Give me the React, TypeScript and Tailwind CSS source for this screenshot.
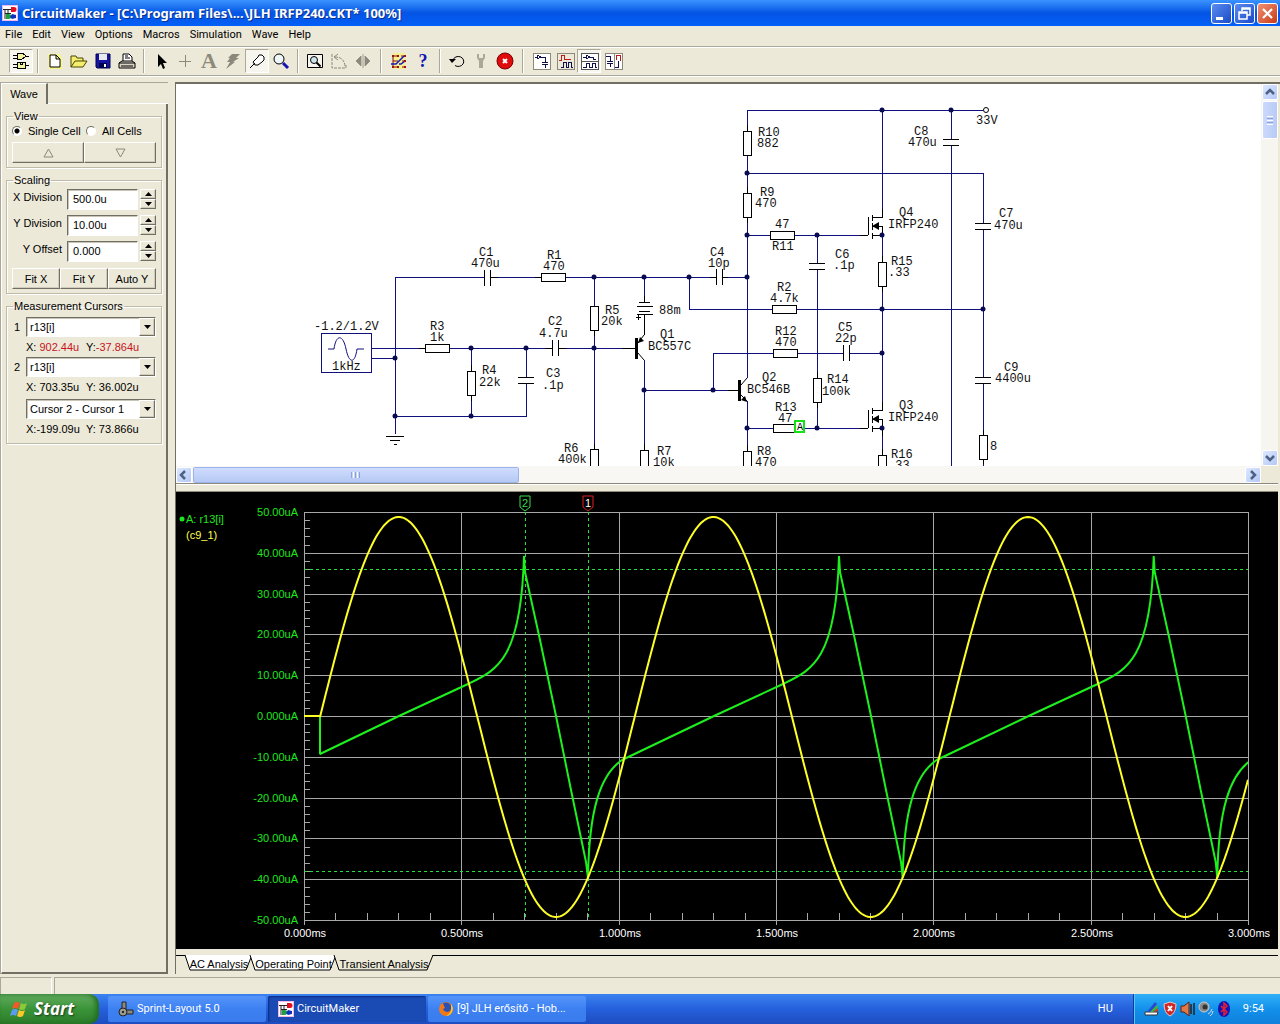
import { useState } from "react"
import type { ReactNode } from "react"

const NAVY = "#10107c"

// x, y (baseline), text
const labels: [number, number, string][] = [
  [314, 330, "-1.2/1.2V"],
  [332, 370, "1kHz"],
  [479, 256, "C1"],
  [471, 267, "470u"],
  [547, 259, "R1"],
  [543, 270, "470"],
  [430, 330, "R3"],
  [430, 341, "1k"],
  [482, 374, "R4"],
  [479, 386, "22k"],
  [546, 377, "C3"],
  [542, 389, ".1p"],
  [548, 325, "C2"],
  [539, 337, "4.7u"],
  [605, 314, "R5"],
  [601, 325, "20k"],
  [564, 452, "R6"],
  [558, 463, "400k"],
  [659, 314, "88m"],
  [660, 338, "Q1"],
  [648, 350, "BC557C"],
  [657, 455, "R7"],
  [653, 466, "10k"],
  [710, 256, "C4"],
  [708, 267, "10p"],
  [777, 291, "R2"],
  [770, 302, "4.7k"],
  [775, 335, "R12"],
  [775, 346, "470"],
  [838, 331, "C5"],
  [835, 342, "22p"],
  [762, 381, "Q2"],
  [747, 393, "BC546B"],
  [775, 411, "R13"],
  [778, 422, "47"],
  [757, 455, "R8"],
  [755, 466, "470"],
  [976, 124, "33V"],
  [758, 136, "R10"],
  [757, 147, "882"],
  [760, 196, "R9"],
  [755, 207, "470"],
  [775, 228, "47"],
  [772, 250, "R11"],
  [835, 258, "C6"],
  [833, 269, ".1p"],
  [827, 383, "R14"],
  [822, 395, "100k"],
  [899, 216, "Q4"],
  [888, 228, "IRFP240"],
  [891, 265, "R15"],
  [888, 276, ".33"],
  [899, 409, "Q3"],
  [888, 421, "IRFP240"],
  [891, 458, "R16"],
  [888, 469, ".33"],
  [914, 135, "C8"],
  [908, 146, "470u"],
  [999, 217, "C7"],
  [994, 229, "470u"],
  [1004, 371, "C9"],
  [995, 382, "4400u"],
  [990, 450, "8"]
]

const nodes = [
  [395, 358], [395, 416], [471, 416], [471, 348], [526, 348], [594, 277], [594, 348],
  [644, 277], [689, 277], [747, 277], [747, 173], [747, 235], [747, 428], [644, 390],
  [713, 390], [817, 235], [817, 428], [882, 110], [951, 110], [882, 309], [983, 309],
  [882, 353], [882, 235], [882, 428]
]

const hResistors = [[541, 273], [425, 344], [772, 305], [773, 349], [770, 231], [773, 424]]
const vResistors = [
  [467, 371], [590, 306], [590, 449], [640, 450], [743, 131], [743, 193],
  [743, 451], [813, 378], [878, 262], [878, 455], [979, 435]
]

const wires = [
  "M371 348H425M371 358H395M395 434V277H484M490 277H541M565 277H716M722 277H747",
  "M449 348H552M558 348H636M471 348V371M471 395V416M526 348V377M526 383V416H395",
  "M594 277V306M594 330V449M644 277V302M644 314V335M644 360V450M644 390H739",
  "M713 390V353H773M797 353H843M849 353H882M689 277V309H772M796 309H983",
  "M747 131V110H983M747 155V193M747 217V378M747 401V451M747 428H773M797 428H868",
  "M747 235H770M794 235H868M817 235V263M817 269V378M817 402V428",
  "M882 110V217M882 235V262M882 286V410M882 428V455M951 110V139M951 145V470",
  "M747 173H983V223M983 229V377M983 383V435M983 459V470"
].join("")

// plates, battery, ground and the short component leads
const parts = [
  "M484 270V286M490 270V286M716 269V285M722 269V285M552 340V356M558 340V356M843 345V361M849 345V361",
  "M518 377H534M518 383H534M809 263H825M809 269H825M943 139H959M943 145H959",
  "M975 223H991M975 229H991M975 377H991M975 383H991",
  "M639 302H650M637 306H653M639 311H650M637 314H653M636 317H641M638 315V320",
  "M386 436H404M390 440H400M394 444H397",
  "M535 277H541M419 348H425M546 348H552M558 348H566M622 348H636M490 277H498M710 277H716M722 277H728",
  "M747 125V131M747 187V193M747 217V223M882 256V262M882 286V292M882 449V455M882 428V436M983 430V435M983 459V464",
  "M644 296V302M644 314V335M471 365V371M471 395V401M594 330V336M594 444V449M644 444V450M747 445V451",
  "M817 372V378M817 402V408M860 235H868M860 428H868M728 390H739"
].join("")

function Mosfet({ y }: { y: number }) {
  return (
    <g transform={`translate(868 ${y})`}>
      <path
        d="M0 0V18M4 -2V4M4 6V13M4 16V22M4 0H14V-8M4 18H14V9H4"
        fill="none"
        stroke="#000"
        shapeRendering="crispEdges"
      />
      <path d="M4 9L11 5V13Z" />
    </g>
  )
}

function Schematic() {
  return (
    <svg width="1085" height="382" viewBox="176 84 1085 382" className="block max-w-none">
      <g fill="none" shapeRendering="crispEdges">
        <path d={wires} stroke={NAVY} />
        <path d={parts} stroke="#000" />
        <rect x="321" y="333" width="50" height="39" fill="#fff" stroke={NAVY} />
      </g>
      <path d="M328 349H334C336 334 343 334 346 349S355 364 357 349H364" fill="none" stroke={NAVY} />
      <g fill="#fff" stroke="#000" shapeRendering="crispEdges">
        {hResistors.map(([x, y]) => (
          <rect key={`${x}-${y}`} x={x} y={y} width="24" height="8" />
        ))}
        {vResistors.map(([x, y]) => (
          <rect key={`${x}-${y}`} x={x} y={y} width="8" height="24" />
        ))}
      </g>
      {/* Q1 */}
      <rect x="635" y="338" width="3" height="21" />
      <path d="M638 343L644 335M638 353L644 360" stroke="#000" fill="none" />
      <path d="M638 343L640 337L644 341Z" />
      {/* Q2 */}
      <rect x="738" y="380" width="3" height="21" />
      <path d="M741 385L747 378M741 395L747 401" stroke="#000" fill="none" />
      <path d="M747 402L741 400L745 396Z" />
      <Mosfet y={217} />
      <Mosfet y={410} />
      <circle cx="986" cy="110" r="2.5" fill="#fff" stroke="#000" />
      {nodes.map(([x, y]) => (
        <circle key={`${x}-${y}`} cx={x} cy={y} r="2.5" fill="#0a0a50" />
      ))}
      <g className="font-['Liberation_Mono',monospace] text-[12px]" fill="#111">
        {labels.map(([x, y, text]) => (
          <text key={`${x}-${y}`} x={x} y={y}>
            {text}
          </text>
        ))}
      </g>
      <rect x="795" y="421" width="9" height="11" fill="#fff" stroke="#14e014" strokeWidth="2" />
      <text x="797" y="430" className="font-['Liberation_Mono',monospace] text-[10px]">
        A
      </text>
    </svg>
  )
}

const PLOT = { left: 304, right: 1248, top: 512, bottom: 920, zero: 717 }
const MS = (PLOT.right - PLOT.left) / 3
const UA = (PLOT.bottom - PLOT.top) / 100

function sinePath() {
  let d = `M${PLOT.left} 716H320`
  for (let x = 320; x <= PLOT.right; x += 2) {
    d += `L${x} ${(PLOT.zero - 200 * Math.sin(((x - 320) / MS) * 2 * Math.PI)).toFixed(1)}`
  }
  return d
}

// resistor current: slow ramp, sharp peak, then a steep fall to the next period
function currentPath() {
  let d = "M320 716V754L399 716L468 684C497 670 521 660 524 556L525 572L540 640L556 716L571 790L586 862"
  for (let n = 0; n < 3; n++) {
    const p = (x: number, y: number) => `${(x + n * MS).toFixed(1)} ${y}`
    d += `L${p(588, 878)}C${p(589, 810)} ${p(600, 775)} ${p(622, 760)}`
    d += `L${p(714, 716)}L${p(783, 684)}C${p(812, 670)} ${p(836, 660)} ${p(839, 556)}`
    d += `L${p(840, 572)}L${p(855, 640)}L${p(871, 716)}L${p(886, 790)}L${p(901, 862)}`
  }
  return d
}

function Flag({ x, color, text, label }: { x: number; color: string; text: string; label: string }) {
  return (
    <g>
      <path d={`M${x - 5} 496H${x + 5}V507L${x} 511L${x - 5} 507Z`} fill="#000" stroke={color} />
      <text x={x} y="507" fill={text} textAnchor="middle">
        {label}
      </text>
    </g>
  )
}

function WaveChart() {
  const rows = Array.from({ length: 11 }, (_, i) => i)
  const minor = Array.from({ length: 50 }, (_, i) => i)
  const columns = Array.from({ length: 7 }, (_, i) => i)
  const ticks = Array.from({ length: 30 }, (_, i) => i)

  return (
    <svg viewBox="176 492 1102 457" className="block w-full bg-black font-['Liberation_Sans',sans-serif] text-[11px]">
      <defs>
        <clipPath id="plot">
          <rect x="304" y="500" width="944" height="425" />
        </clipPath>
      </defs>
      <g stroke="#a8a8a8" shapeRendering="crispEdges">
        {rows.map((i) => (
          <line key={i} x1={PLOT.left} x2={PLOT.right} y1={Math.round(PLOT.top + i * 10 * UA)} y2={Math.round(PLOT.top + i * 10 * UA)} />
        ))}
        {minor.map((i) => (
          <line key={i} x1={PLOT.left} x2={310} y1={Math.round(PLOT.top + i * 2 * UA)} y2={Math.round(PLOT.top + i * 2 * UA)} />
        ))}
        {columns.map((i) => (
          <line key={i} x1={Math.round(PLOT.left + (i * MS) / 2)} x2={Math.round(PLOT.left + (i * MS) / 2)} y1={PLOT.top} y2={925} />
        ))}
        {ticks.map((i) => (
          <line key={i} x1={Math.round(PLOT.left + (i * MS) / 10)} x2={Math.round(PLOT.left + (i * MS) / 10)} y1={913} y2={PLOT.bottom} />
        ))}
      </g>
      <g stroke="#28e03c" strokeDasharray="3 3" shapeRendering="crispEdges">
        <line x1="304" x2="1248" y1="569" y2="569" />
        <line x1="304" x2="1248" y1="871" y2="871" />
        <line x1="525" x2="525" y1="512" y2="920" />
        <line x1="588" x2="588" y1="512" y2="920" />
      </g>
      <g fill="none" strokeWidth="2" clipPath="url(#plot)">
        <path d={currentPath()} stroke="#1ef01e" strokeLinejoin="bevel" />
        <path d={sinePath()} stroke="#ffff28" />
      </g>
      <Flag x={525} color="#3cdc50" text="#3cdc50" label="2" />
      <Flag x={588} color="#e02020" text="#fff" label="1" />
      <g fill="#1ee61e">
        {rows.map((i) => (
          <text key={i} x="298" y={Math.round(516 + i * 10 * UA)} textAnchor="end">
            {i === 5 ? "0.000uA" : `${50 - i * 10}.00uA`}
          </text>
        ))}
        <circle cx="182" cy="519" r="2.5" />
        <text x="186" y="523">
          A: r13[i]
        </text>
      </g>
      <text x="186" y="539" fill="#ffff50">
        (c9_1)
      </text>
      <g fill="#fff">
        {columns.map((i) => (
          <text key={i} x={Math.round(305 + (i * MS) / 2)} y="937" textAnchor="middle">
            {`${(i / 2).toFixed(3)}ms`}
          </text>
        ))}
      </g>
    </svg>
  )
}

function AppIcon() {
  return (
    <svg width="16" height="16" viewBox="0 0 16 16" className="shrink-0">
      <rect width="16" height="16" fill="#f4b8e8" />
      <rect x="1" y="1" width="14" height="14" fill="#fff" />
      <path d="M1 4.5H10M3 4V14M6 4V8M3 8.5H9" stroke="#222" fill="none" />
      <path d="M9 2h3a2 2 0 0 1 0 5h-3z" fill="#e01020" />
      <path d="M4 9h3a2 2 0 0 1 0 5H4z" fill="#20a040" />
      <path d="M10 9l4 1v3l-4 1-2-2z" fill="#1030c0" />
    </svg>
  )
}

const icons: Record<string, ReactNode> = {
  gates: (
    <g fill="#f4f49c" stroke="#000" shapeRendering="crispEdges">
      <path d="M5 1h5l3 2v2l-3 2H5zM5 10h8v6H5z" />
      <path d="M1 3h4M1 6h4M13 4h4M1 12h4M1 15h4M13 13h4M8 10v2h2v-2" fill="none" />
    </g>
  ),
  new: (
    <g>
      <path d="M2 2h11l3 4v11H3z" fill="#f6f68a" />
      <path d="M4 3h6l4 4v8H4zM10 3v4h4" fill="#fff" stroke="#000" />
    </g>
  ),
  open: <path d="M1 15V4h5l1 2h6v3M1 15l4-6h12l-4 6z" fill="#f4ee70" stroke="#4a4400" />,
  save: (
    <g>
      <path d="M2 2h14v14H3l-1-1z" fill="#1414a0" stroke="#000050" />
      <path d="M5 2h8v6H5z" fill="#e8e8f0" />
      <path d="M5 11h8v5H5z" fill="#000050" />
      <path d="M10 12h2v3h-2z" fill="#fff" />
    </g>
  ),
  print: (
    <g fill="#fff" stroke="#000">
      <path d="M5 9V2h6l3 3v4M7 4h3M7 6h5" />
      <path d="M1 11l3-2h10l3 2v5H1zM1 11h16M3 14h12" fill="#d8d4c4" />
    </g>
  ),
  arrow: <path d="M6 2v13l3-3 2 5 2-1-2-5h4z" />,
  plus: <path d="M9 3v12M3 9h12" stroke="#8c897c" shapeRendering="crispEdges" />,
  bolt: <path d="M8 2h8l-4 4h3l-6 4h2l-9 7 4-7H3l3-4H4z" fill="#8c897c" />,
  probe: <path d="M2 16l5-5M7 13l-2-3 5-5 1-2h3l2 2v3l-2 2-4 3z" fill="#fff" stroke="#000" />,
  magnifier: (
    <g>
      <circle cx="7" cy="7" r="5" fill="#eef6fa" stroke="#000" />
      <path d="M11 11l5 5" stroke="#1414b4" strokeWidth="3" />
    </g>
  ),
  zoomPage: (
    <g fill="none" stroke="#000">
      <path d="M1.500 2.500h15v13h-15z" fill="#f6f5ee" />
      <circle cx="8" cy="8" r="3.500" fill="#cde4ea" />
      <path d="M10.500 10.500l4 4" strokeWidth="2" />
    </g>
  ),
  rotate: (
    <g fill="none" stroke="#8c897c">
      <path d="M2 2v14h14v-3M5 5q9 0 10 9" strokeDasharray="3 1" />
      <path d="M8 2L4 5l4 3" />
    </g>
  ),
  mirror: <path d="M7 4v10L2 9zM11 4v10l5-5zM9 2v14" fill="#8c897c" stroke="#8c897c" strokeWidth="0.8" />,
  trace: (
    <g fill="none">
      <path d="M3 1h12v16H3z" fill="#f8f090" />
      <path d="M3 4H8M3 9h5M3 15h6M11 4h4M12 9h4M12 15h4M3 4v11" stroke="#801010" />
      <path d="M1 12h5l8-8M9 12h2l4-3" stroke="#1818b8" strokeWidth="1.5" />
      <path d="M2 3h2v2H2zM7 3h2v2H7zM14 3h2v2h-2zM14 8h2v2h-2zM7 14h2v2H7zM14 14h2v2h-2zM2 14h2v2H2z" fill="#a01010" />
    </g>
  ),
  undo: (
    <g fill="none" stroke="#000">
      <path d="M5 8a5.500 5 0 1 1 2 5.500" />
      <path d="M1 7h7l-4 4z" fill="#000" stroke="none" />
    </g>
  ),
  wrench: <path d="M5 2v4l2 3v7h4V9l2-3V2h-2v4H7V2z" fill="#aca899" />,
  stop: (
    <g>
      <circle cx="9" cy="9" r="8" fill="#e00c0c" stroke="#700" />
      <path d="M7 7l4 4M11 7l-4 4" stroke="#fff" strokeWidth="2" />
    </g>
  ),
  circuit: (
    <g fill="none" stroke="#10104a" shapeRendering="crispEdges">
      <path d="M1 1h17v16H1z" fill="#fff" stroke="#8c897c" />
      <path d="M3 5h2M5 3v4l4-2zM9 5h4v5M10 10h6M10 12h6M13 12v4" />
    </g>
  ),
  waves: (
    <g fill="none" stroke="#10104a" shapeRendering="crispEdges">
      <path d="M1 1h17v16H1z" fill="#ece9d8" stroke="#8c897c" />
      <path d="M3 8h2V3h3v4h7" stroke="#c01818" />
      <path d="M5 15h2v-5h3v5h2v-5h3v5h2" />
    </g>
  ),
  split: (
    <g fill="none" stroke="#10104a" shapeRendering="crispEdges">
      <path d="M1 1h17v16H1zM1 9h17" fill="#fff" stroke="#555" />
      <path d="M3 5h3M6 3v4l4-2zM10 5h3v2h3M3 15h3v-4h3v4h3v-4h3v4h2" />
    </g>
  ),
  sideBySide: (
    <g fill="none" stroke="#10104a" shapeRendering="crispEdges">
      <path d="M1 1h17v16H1zM10 1v16" fill="#fff" stroke="#8c897c" />
      <path d="M2 4h4v5M3 9h6M3 11h6M6 11v4M11 15h3V9" />
      <path d="M12 8V3h4v6" stroke="#c01818" />
    </g>
  )
}

function ToolButton({ name, pressed }: { name: string; pressed?: boolean }) {
  return (
    <button
      aria-label={name}
      className={
        pressed
          ? "flex h-6 w-6 items-center justify-center border border-t-[#aca899] border-l-[#aca899] border-r-white border-b-white bg-[#f6f5ee]"
          : "flex h-6 w-6 items-center justify-center"
      }
    >
      {name === "text" ? (
        <span className="font-['Liberation_Serif',serif] text-[22px] leading-6 font-bold text-[#8c897c]">A</span>
      ) : name === "help" ? (
        <span className="font-['Liberation_Serif',serif] text-[18px] leading-6 font-bold text-[#1414b4]">?</span>
      ) : (
        <svg width="19" height="18" viewBox="0 0 19 18" className="shrink-0">
          {icons[name]}
        </svg>
      )}
    </button>
  )
}

function Separator({ wide }: { wide?: boolean }) {
  return (
    <div className={wide ? "flex h-6 w-3 justify-center" : "flex h-6 w-[10px] justify-center"}>
      <div className="w-[2px] border-l border-[#aca899] bg-white" />
    </div>
  )
}

function Toolbar() {
  return (
    <div className="flex h-[30px] items-center border-t border-b border-[#aca899] pl-[9px] shadow-[inset_0_1px_#fff,0_1px_#fff]">
      <ToolButton name="gates" pressed />
      <Separator />
      {["new", "open", "save", "print"].map((n) => (
        <ToolButton key={n} name={n} />
      ))}
      <Separator />
      {["arrow", "plus", "text", "bolt", "probe", "magnifier"].map((n) => (
        <ToolButton key={n} name={n} pressed={n === "probe"} />
      ))}
      <Separator />
      {["zoomPage", "rotate", "mirror"].map((n) => (
        <ToolButton key={n} name={n} />
      ))}
      <Separator wide />
      {["trace", "help"].map((n) => (
        <ToolButton key={n} name={n} />
      ))}
      <Separator />
      {["undo", "wrench", "stop"].map((n) => (
        <ToolButton key={n} name={n} />
      ))}
      <Separator wide />
      {["circuit", "waves", "split", "sideBySide"].map((n) => (
        <ToolButton key={n} name={n} pressed={n === "split"} />
      ))}
    </div>
  )
}

function TitleBar() {
  return (
    <div className="flex h-[26px] items-center bg-linear-to-b from-[#3a93ff] via-[#0454e4] to-[#0460f8] px-[2px]">
      <AppIcon />
      <h1 className="ml-1 flex-1 font-['Noto_Sans',sans-serif] text-[13px] leading-5 font-bold whitespace-nowrap text-white [text-shadow:1px_1px_#0a2f8c]">
        CircuitMaker - [C:\Program Files\...\JLH IRFP240.CKT* 100%]
      </h1>
      <div className="flex gap-[2px]">
        <button aria-label="Minimize" className="h-[21px] w-[21px] rounded-[3px] border border-white bg-linear-to-br from-[#5a8cf0] to-[#1c49c8]">
          <svg viewBox="0 0 19 19">
            <path d="M4 13h7v3H4z" fill="#fff" />
          </svg>
        </button>
        <button aria-label="Restore" className="h-[21px] w-[21px] rounded-[3px] border border-white bg-linear-to-br from-[#5a8cf0] to-[#1c49c8]">
          <svg viewBox="0 0 19 19">
            <path d="M7 7V4h8v7h-3M7 5h8M4 8h8v7H4zM4 9h8" fill="none" stroke="#fff" strokeWidth="1.500" />
          </svg>
        </button>
        <button aria-label="Close" className="h-[21px] w-[21px] rounded-[3px] border border-white bg-linear-to-br from-[#f09070] to-[#c83810]">
          <svg viewBox="0 0 19 19">
            <path d="M5 5l9 9M14 5l-9 9" stroke="#fff" strokeWidth="2.200" />
          </svg>
        </button>
      </div>
    </div>
  )
}

const raised = "border border-t-white border-l-white border-r-[#716f64] border-b-[#716f64] shadow-[inset_-1px_-1px_#cfccbb] bg-[#ece9d8]"
const sunken = "border border-t-[#716f64] border-l-[#716f64] border-r-white border-b-white shadow-[inset_1px_1px_#c8c5b6] bg-white"

function Group({ title, children }: { title: string; children: ReactNode }) {
  return (
    <fieldset className="border border-[#bfbba9] px-[5px] pb-[4px] shadow-[inset_1px_1px_#fff,1px_1px_#fff]">
      <legend className="ml-px px-px leading-3">{title}</legend>
      {children}
    </fieldset>
  )
}

function DivisionField({ id, label, initial }: { id: string; label: string; initial: string }) {
  const [value, setValue] = useState(initial)

  return (
    <div className="flex h-[26px] items-center">
      <label htmlFor={id} className="w-[50px] pb-1 text-right whitespace-nowrap">
        {label}
      </label>
      <input
        id={id}
        value={value}
        onChange={(e) => setValue(e.target.value)}
        className={`ml-[5px] h-[21px] w-[71px] px-[5px] ${sunken}`}
      />
      <div className="ml-[2px] flex w-4 flex-col">
        <button aria-label={`Increase ${label}`} className={`flex h-[10px] items-center justify-center ${raised}`}>
          <svg width="7" height="4" viewBox="0 0 7 4">
            <path d="M0 4L3.500 0L7 4Z" />
          </svg>
        </button>
        <button aria-label={`Decrease ${label}`} className={`flex h-[10px] items-center justify-center ${raised}`}>
          <svg width="7" height="4" viewBox="0 0 7 4">
            <path d="M0 0L3.500 4L7 0Z" />
          </svg>
        </button>
      </div>
    </div>
  )
}

function Combo({ label, options }: { label: string; options: string[] }) {
  return (
    <div className="relative ml-[14px] h-5">
      <select aria-label={label} className={`h-5 w-full appearance-none px-[3px] ${sunken}`}>
        {options.map((o) => (
          <option key={o}>{o}</option>
        ))}
      </select>
      <span className={`pointer-events-none absolute top-px right-px flex h-[18px] w-4 items-center justify-center ${raised}`}>
        <svg width="7" height="4" viewBox="0 0 7 4">
          <path d="M0 0L3.500 4L7 0Z" />
        </svg>
      </span>
    </div>
  )
}

function Readout({ x, y, red }: { x: string; y: string; red?: boolean }) {
  const color = red ? "text-[#c8141e]" : ""
  return (
    <div className="ml-[14px] flex h-5 items-center whitespace-pre">
      <span className="w-[60px]">
        X:<span className={color}>{x}</span>
      </span>
      <span>
        Y:<span className={color}>{y}</span>
      </span>
    </div>
  )
}

function SidePanel() {
  const [cell, setCell] = useState("single")

  return (
    <aside className="flex w-[168px] shrink-0 flex-col border-t border-[#aca899] border-l border-l-[#aca899] font-['Liberation_Sans',sans-serif] text-[11px] leading-3">
      <div className="flex">
        <button className="h-[21px] w-[47px] border-t border-l border-white border-r-2 border-r-[#716f64]">Wave</button>
        <div className="flex-1 border-b border-white" />
      </div>
      <div className="flex flex-1 flex-col gap-[6px] border-r-2 border-b-2 border-l border-r-[#716f64] border-b-[#716f64] border-l-white px-1 pt-[6px]">
        <Group title="View">
          <div className="flex h-[17px] items-center">
            <label className="flex w-[74px] items-center gap-[6px] whitespace-nowrap">
              <input
                type="radio"
                name="cell"
                checked={cell === "single"}
                onChange={() => setCell("single")}
                className="h-[10px] w-[10px] appearance-none rounded-full border border-[#716f64] border-r-white border-b-white bg-white checked:bg-[radial-gradient(#000_2px,#fff_3px)]"
              />
              Single Cell
            </label>
            <label className="flex items-center gap-[6px] whitespace-nowrap">
              <input
                type="radio"
                name="cell"
                checked={cell === "all"}
                onChange={() => setCell("all")}
                className="h-[10px] w-[10px] appearance-none rounded-full border border-[#716f64] border-r-white border-b-white bg-white checked:bg-[radial-gradient(#000_2px,#fff_3px)]"
              />
              All Cells
            </label>
          </div>
          <div className="mt-[3px] flex">
            <button aria-label="Previous cell" className={`flex h-[21px] flex-1 items-center justify-center ${raised}`}>
              <svg width="11" height="10" viewBox="0 0 11 10">
                <path d="M1 9h9L5.500 1z" fill="none" stroke="#8c897c" />
              </svg>
            </button>
            <button aria-label="Next cell" className={`flex h-[21px] flex-1 items-center justify-center ${raised}`}>
              <svg width="11" height="10" viewBox="0 0 11 10">
                <path d="M1 1h9L5.500 9z" fill="none" stroke="#8c897c" />
              </svg>
            </button>
          </div>
        </Group>

        <Group title="Scaling">
          <DivisionField id="x-division" label="X Division" initial="500.0u" />
          <DivisionField id="y-division" label="Y Division" initial="10.00u" />
          <DivisionField id="y-offset" label="Y Offset" initial="0.000" />
          <div className="mt-1 flex">
            {["Fit X", "Fit Y", "Auto Y"].map((t) => (
              <button key={t} className={`h-[21px] flex-1 whitespace-nowrap ${raised}`}>
                {t}
              </button>
            ))}
          </div>
        </Group>

        <Group title="Measurement Cursors">
          <div className="relative mt-[5px]">
            <span className="absolute top-1 left-[2px]">1</span>
            <Combo label="Cursor 1" options={["r13[i]", "c9_1"]} />
          </div>
          <Readout x=" 902.44u" y="-37.864u" red />
          <div className="relative">
            <span className="absolute top-1 left-[2px]">2</span>
            <Combo label="Cursor 2" options={["r13[i]", "c9_1"]} />
          </div>
          <Readout x=" 703.35u" y=" 36.002u" />
          <div className="mt-[2px]">
            <Combo label="Difference" options={["Cursor 2 - Cursor 1", "Cursor 1 - Cursor 2"]} />
          </div>
          <Readout x="-199.09u" y=" 73.866u" />
        </Group>
      </div>
    </aside>
  )
}

const chevrons: Record<string, string> = {
  up: "M4 10L8 6L12 10",
  down: "M4 6L8 10L12 6",
  left: "M9 4L5 8L9 12",
  right: "M6 4L10 8L6 12"
}

function ScrollArrow({ dir }: { dir: string }) {
  return (
    <button aria-label={`Scroll ${dir}`} className="h-4 w-4 rounded-[2px] border border-white bg-linear-to-br from-[#dde8ff] to-[#b4c8f6]">
      <svg viewBox="1 1 14 14">
        <path d={chevrons[dir]} fill="none" stroke="#4d6185" strokeWidth="2.500" />
      </svg>
    </button>
  )
}

function SchematicPane() {
  return (
    <div>
      <div className="flex h-[382px]">
        <div className="min-w-0 flex-1 overflow-hidden bg-white">
          <Schematic />
        </div>
        <div className="flex w-[17px] flex-col items-center bg-[#f6f5f0]">
          <ScrollArrow dir="up" />
          <div className="mt-px flex h-[38px] w-4 flex-col items-center justify-center gap-px rounded-[2px] border border-white bg-linear-to-r from-[#ccd9fd] to-[#b9cbf5]">
            <div className="h-px w-[6px] bg-white" />
            <div className="h-px w-[6px] bg-[#8ca4d8]" />
            <div className="h-px w-[6px] bg-white" />
            <div className="h-px w-[6px] bg-[#8ca4d8]" />
            <div className="h-px w-[6px] bg-white" />
          </div>
          <div className="flex-1" />
          <ScrollArrow dir="down" />
        </div>
      </div>
      <div className="flex h-[17px]">
        <div className="flex flex-1 items-center bg-[#f8f7f3]">
          <ScrollArrow dir="left" />
          <div className="mx-px flex h-4 w-[30%] items-center justify-center gap-px rounded-[2px] border border-[#9cb4ec] bg-linear-to-b from-[#cfdcfe] to-[#b6c9f4]">
            <div className="h-[6px] w-px bg-[#8ca4d8]" />
            <div className="h-[6px] w-px bg-white" />
            <div className="h-[6px] w-px bg-[#8ca4d8]" />
            <div className="h-[6px] w-px bg-white" />
            <div className="h-[6px] w-px bg-[#8ca4d8]" />
          </div>
          <div className="flex-1" />
          <ScrollArrow dir="right" />
        </div>
        <div className="w-[17px]" />
      </div>
    </div>
  )
}

const analyses = [
  { name: "AC Analysis", width: "w-[68px]", path: "M0 0L5 15H61L67 0" },
  { name: "Operating Point", width: "w-[87px]", path: "M0 0L5 15H80L86 0" },
  { name: "Transient Analysis", width: "w-[100px]", path: "M0 0L5 15H93L99 0" }
]

function AnalysisTabs() {
  const [active, setActive] = useState("Transient Analysis")

  return (
    <div className="h-[22px] pt-[6px]">
      <div className="flex border-t border-black pl-[9px]">
        {analyses.map((a) => (
          <button
            key={a.name}
            onClick={() => setActive(a.name)}
            className={`relative -mr-[3px] h-4 font-['Liberation_Sans',sans-serif] text-[11px] leading-[14px] whitespace-nowrap ${a.width}`}
          >
            <svg className="absolute -top-px left-0 overflow-visible" width="100%" height="16">
              <path d={a.path} fill={a.name === active ? "#ece9d8" : "#fff"} stroke="#000" />
            </svg>
            <span className="relative">{a.name}</span>
          </button>
        ))}
      </div>
    </div>
  )
}

function TaskButton({ icon, label, active }: { icon: ReactNode; label: string; active?: boolean }) {
  return (
    <button
      className={`flex h-[26px] w-[158px] items-center gap-[3px] rounded-[2px] px-[10px] text-left text-white ${
        active ? "bg-[#1a4ab4] shadow-[inset_1px_1px_2px_#0c2c80]" : "bg-linear-to-b from-[#5594fa] via-[#3c80f2] to-[#3a7cee]"
      }`}
    >
      {icon}
      {label}
    </button>
  )
}

function Taskbar() {
  return (
    <footer className="flex h-[30px] items-center bg-linear-to-b from-[#3b82f0] via-[#2560dc] to-[#1e4cc0] text-[11px] text-white">
      <button className="flex h-[30px] w-[99px] items-center gap-1 rounded-r-[10px] bg-linear-to-b from-[#62ac60] via-[#3a9438] to-[#2c7c2a] pl-[10px] font-['Open_Sans',sans-serif] text-[17px] font-bold text-white italic shadow-[inset_-3px_0_5px_#226a22] [text-shadow:1px_1px_2px_#1a3a1a]">
        <svg width="20" height="19" viewBox="0 0 20 19">
          <path d="M4 3q3-2 6 0L8 9q-3-2-6 0z" fill="#f05a28" />
          <path d="M11 3q3 2 6 0l-2 6q-3 2-6 0z" fill="#8cc83c" />
          <path d="M2 10q3-2 6 0l-2 6q-3-2-6 0z" fill="#5a9cf0" />
          <path d="M9 10q3 2 6 0l-2 6q-3 2-6 0z" fill="#fcc828" />
        </svg>
        Start
      </button>
      <div className="ml-[9px] flex flex-1 gap-[2px]">
        <TaskButton
          label="Sprint-Layout 5.0"
          icon={
            <svg width="16" height="16" viewBox="0 0 16 16">
              <path d="M4 1h4v8H4zM8 9h7v4H8z" fill="#8a8a80" stroke="#222" />
              <circle cx="5" cy="11" r="4" fill="#9a9a90" stroke="#222" />
              <circle cx="5" cy="11" r="1" />
            </svg>
          }
        />
        <TaskButton label="CircuitMaker" icon={<AppIcon />} active />
        <TaskButton
          label="[9] JLH erősítő - Hob..."
          icon={
            <svg width="16" height="16" viewBox="0 0 16 16">
              <circle cx="8" cy="8" r="7" fill="#f07818" />
              <path d="M5 2q6-2 8 3 1 4-3 6-4 0-5-3l2-1-1-2z" fill="#2c50b4" />
              <path d="M13 3q3 4 1 8-2 4-6 4 5-3 5-6z" fill="#fcc828" />
            </svg>
          }
        />
      </div>
      <span className="mr-5">HU</span>
      <div className="flex h-[30px] items-center gap-[2px] border-l border-[#0c3c9c] bg-linear-to-b from-[#30b0f8] via-[#1290ea] to-[#1080dc] pr-4 pl-[10px] shadow-[inset_1px_0_#5cc4fc]">
        <svg width="16" height="16" viewBox="0 0 16 16">
          <path d="M1 11h13l-1 3H1z" fill="#fff" stroke="#333" />
          <path d="M3 11L11 1l2 2-6 8z" fill="#2848d0" />
          <path d="M6 11l7-7 1 3-5 4z" fill="#38b838" />
          <path d="M9 11l5-4v3z" fill="#e83020" />
        </svg>
        <svg width="16" height="16" viewBox="0 0 16 16">
          <path d="M8 1l6 2q0 9-6 12Q2 12 2 3z" fill="#d02828" stroke="#e8c8c8" />
          <path d="M6 5l4 5M10 5l-4 5" stroke="#fff" strokeWidth="2" />
        </svg>
        <svg width="16" height="16" viewBox="0 0 16 16">
          <path d="M1 5h3l5-4v14l-5-4H1z" fill="#e07848" stroke="#5a2010" />
          <path d="M11 3v10M14 2v12" stroke="#222" strokeWidth="1.500" />
        </svg>
        <svg width="16" height="16" viewBox="0 0 16 16">
          <circle cx="6" cy="6" r="5" fill="#888" stroke="#ccc" />
          <circle cx="7" cy="6" r="2.500" fill="#333" />
          <path d="M10 13q3-1 4-5M12 15q3-2 3-5" stroke="#c8d8f0" fill="none" />
        </svg>
        <svg width="16" height="16" viewBox="0 0 16 16">
          <ellipse cx="8" cy="8" rx="6" ry="8" fill="#1414b4" />
          <path d="M5 5l6 6-3 3V2l3 3-6 6" fill="none" stroke="#e82030" strokeWidth="1.500" />
        </svg>
        <span className="ml-[9px]">9:54</span>
      </div>
    </footer>
  )
}

export default function App() {
  return (
    <div className="flex min-h-screen flex-col bg-[#ece9d8] font-['Roboto',sans-serif] text-[11px] leading-4 text-black">
      <TitleBar />
      <nav className="flex h-5 items-center gap-[10px] pb-[2px] pl-[5px]">
        {["File", "Edit", "View", "Options", "Macros", "Simulation", "Wave", "Help"].map((m) => (
          <button key={m}>{m}</button>
        ))}
      </nav>
      <Toolbar />
      <main className="flex flex-1 pt-[6px]">
        <SidePanel />
        <div className="ml-[7px] flex min-w-0 flex-1 flex-col border-t-2 border-l border-[#716f64] pr-[2px]">
          <SchematicPane />
          <div className="h-[9px] border-t border-b border-[#8c897c] shadow-[inset_0_1px_#fff]" />
          <WaveChart />
          <AnalysisTabs />
        </div>
      </main>
      <div className="mt-[3px] flex h-[17px] gap-[2px]">
        <div className="w-[52px] border-t border-r border-l border-[#aca899] border-r-white" />
        <div className="flex-1 border-t border-l border-[#aca899]" />
      </div>
      <Taskbar />
    </div>
  )
}
